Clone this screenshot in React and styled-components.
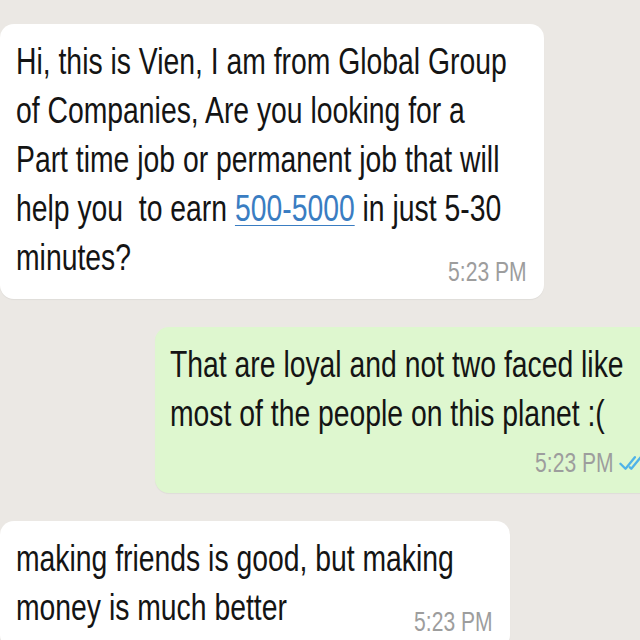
import React from "react";
import styled, { createGlobalStyle } from "styled-components";

const Global = createGlobalStyle`
  html, body { margin: 0; padding: 0; background: #ebe8e4; }
`;

const Page = styled.div`
  width: 640px;
  height: 640px;
  overflow: hidden;
  background: #ebe8e4;
  display: flex;
  flex-direction: column;
  align-items: flex-start;
  gap: 28px;
  padding-top: 24px;
  box-sizing: border-box;
`;

const Bubble = styled.div`
  flex-shrink: 0;
  box-sizing: border-box;
  width: ${(p) => p.$w}px;
  margin-left: ${(p) => p.$x}px;
  padding: 13px ${(p) => p.$pr}px ${(p) => p.$pb || 17}px ${(p) => p.$pl}px;
  background: ${(p) => (p.$out ? "#def7cf" : "#ffffff")};
  border-radius: 14px;
  box-shadow: 0 1px 1px rgba(0, 0, 0, 0.05);
`;

const Line = styled.div`
  font-family: "Liberation Sans", Arial, sans-serif;
  font-size: 36px;
  line-height: 49px;
  color: #141414;
  white-space: pre;
  width: max-content;
  transform: scaleX(0.787);
  transform-origin: left center;
`;

const Link = styled.span`
  color: #3a7dc2;
  text-decoration: underline;
  text-decoration-thickness: 1px;
  text-underline-offset: 4px;
`;

const Footer = styled.div`
  display: flex;
  justify-content: space-between;
  align-items: flex-end;
`;

const Meta = styled.div`
  display: flex;
  justify-content: flex-end;
  align-items: center;
  margin-top: ${(p) => p.$mt || 0}px;
  margin-bottom: ${(p) => p.$mb || 0}px;
`;

const Time = styled.span`
  font-family: "Liberation Sans", Arial, sans-serif;
  font-size: 27px;
  line-height: 28px;
  color: #9d9d9d;
  white-space: nowrap;
  transform: scaleX(0.78);
  transform-origin: right center;
`;

const Ticks = styled.svg`
  width: 26px;
  height: 18px;
  margin-left: 5px;
  flex-shrink: 0;
`;

function DoubleTick() {
  return (
    <Ticks viewBox="0 0 18 12" fill="none" stroke="#4fb3e8" strokeWidth="1.6" strokeLinecap="round" strokeLinejoin="round">
      <path d="M1 6.5 L4.5 10 L11 2" />
      <path d="M7.5 9 L8.5 10 L15 2" />
    </Ticks>
  );
}

export default function App() {
  return (
    <>
      <Global />
      <Page>
        <Bubble $w={544} $x={0} $pl={16} $pr={17}>
          <Line>Hi, this is Vien, I am from Global Group</Line>
          <Line>of Companies, Are you looking for a</Line>
          <Line>Part time job or permanent job that will</Line>
          <Line>
            help you  to earn <Link>500-5000</Link> in just 5-30
          </Line>
          <Footer>
            <Line>minutes?</Line>
            <Meta $mb={-4}>
              <Time>5:23 PM</Time>
            </Meta>
          </Footer>
        </Bubble>

        <Bubble $out $w={500} $x={155} $pl={15} $pr={10} $pb={16}>
          <Line>That are loyal and not two faced like</Line>
          <Line>most of the people on this planet :(</Line>
          <Meta $mt={11}>
            <Time>5:23 PM</Time>
            <DoubleTick />
          </Meta>
        </Bubble>

        <Bubble $w={510} $x={0} $pl={16} $pr={17}>
          <Line>making friends is good, but making</Line>
          <Footer>
            <Line>money is much better</Line>
            <Meta $mb={-4}>
              <Time>5:23 PM</Time>
            </Meta>
          </Footer>
        </Bubble>
      </Page>
    </>
  );
}
